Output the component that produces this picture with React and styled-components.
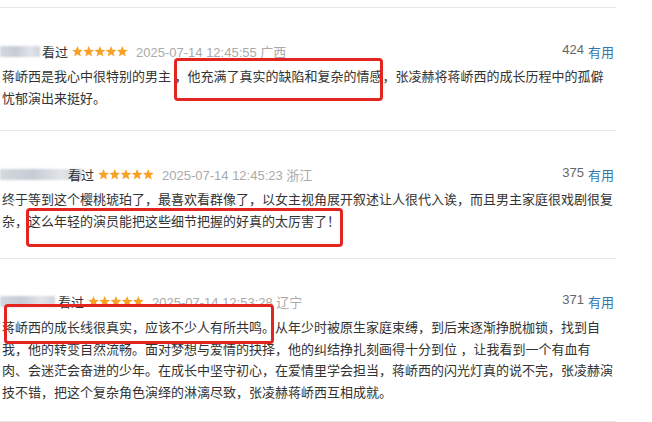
import React from 'react';
import styled, {createGlobalStyle} from "styled-components";

const reviews = [
    {
        blur: 40,
        blurGap: 2,
        date: '2025-07-14 12:45:55',
        place: '广西',
        votes: 424,
        pb: 21,
        text: '蒋峤西是我心中很特别的男主 ，他充满了真实的缺陷和复杂的情感，张凌赫将蒋峤西的成长历程中的孤僻忧郁演出来挺好。',
        mark: {top: 50, left: 174, width: 209, height: 43},
    },
    {
        blur: 82,
        blurGap: -14,
        date: '2025-07-14 12:45:23',
        place: '浙江',
        votes: 375,
        pb: 25,
        text: '终于等到这个樱桃琥珀了，最喜欢看群像了，以女主视角展开叙述让人很代入诶，而且男主家庭很戏剧很复杂，这么年轻的演员能把这些细节把握的好真的太厉害了！',
        mark: {top: 77, left: 26, width: 317, height: 39},
    },
    {
        blur: 55,
        blurGap: 3,
        date: '2025-07-14 12:53:28',
        place: '辽宁',
        votes: 371,
        pb: 17,
        text: '蒋峤西的成长线很真实，应该不少人有所共鸣。从年少时被原生家庭束缚，到后来逐渐挣脱枷锁，找到自我，他的转变自然流畅。面对梦想与爱情的抉择，他的纠结挣扎刻画得十分到位 ，让我看到一个有血有肉、会迷茫会奋进的少年。在成长中坚守初心，在爱情里学会担当，蒋峤西的闪光灯真的说不完，张凌赫演技不错，把这个复杂角色演绎的淋漓尽致，张凌赫蒋峤西互相成就。',
        mark: {top: 45, left: 4, width: 270, height: 40},
    },
];

const Stars = () => (
    <StarRow width="56" height="11" viewBox="0 0 56 11">
        {[0, 1, 2, 3, 4].map(i => (
            <polygon
                key={i}
                transform={`translate(${i * 11.2},0)`}
                points="5.5,0 7,3.7 10.9,3.9 7.9,6.4 8.9,10.5 5.5,8.3 2.1,10.5 3.1,6.4 0.1,3.9 4,3.7"
                fill="#f8a125"
            />
        ))}
    </StarRow>
);

const App = () => {
    return (
        <>
            <GlobalStyle/>
            <List>
                {
                    reviews.map((r, i) => (
                        <Review key={i} $pb={r.pb}>
                            <Header>
                                <Blur $w={r.blur}/>
                                <Watched $gap={r.blurGap}>看过</Watched>
                                <Stars/>
                                <DateText>{r.date} {r.place}</DateText>
                                <Votes>
                                    <Count>{r.votes}</Count>
                                    <Useful>有用</Useful>
                                </Votes>
                            </Header>
                            <Body>{r.text}</Body>
                            <Mark style={{
                                top: r.mark.top,
                                left: r.mark.left,
                                width: r.mark.width,
                                height: r.mark.height
                            }}/>
                        </Review>
                    ))
                }
            </List>
        </>
    );
};

const GlobalStyle = createGlobalStyle`
    body {
        margin: 0;
        background: #fff;
        font-family: "Liberation Sans", "Noto Sans CJK SC", sans-serif;
    }
`;

const List = styled.div`
    width: 616px;
    padding-top: 7px;
    border-bottom: 1px solid #e6e6e6;
`;

const Review = styled.div`
    position: relative;
    border-top: 1px solid #e6e6e6;
    padding: 33px 0 ${p => p.$pb}px;
`;

const Header = styled.div`
    display: flex;
    align-items: center;
    height: 20px;
    font-size: 13px;
    margin-bottom: 5px;
`;

const Blur = styled.span`
    width: ${p => p.$w}px;
    height: 11px;
    background: linear-gradient(90deg, #d3d8de, #c6ccd4 40%, #e1e4e8 75%, #cfd4da);
    filter: blur(1.2px);
    flex-shrink: 0;
`;

const Watched = styled.span`
    color: #333;
    margin-left: ${p => p.$gap}px;
    margin-right: 4px;
    position: relative;
`;

const StarRow = styled.svg`
    display: block;
    margin-right: 8px;
`;

const DateText = styled.span`
    color: #aaa;
`;

const Votes = styled.span`
    margin-left: auto;
    margin-right: 2px;
    display: flex;
    gap: 4px;
`;

const Count = styled.span`
    color: #666;
`;

const Useful = styled.span`
    color: #3377aa;
`;

const Body = styled.p`
    width: 612px;
    margin: 0;
    padding-left: 2px;
    font-size: 13px;
    line-height: 21.7px;
    color: #333;
`;

const Mark = styled.div`
    position: absolute;
    box-sizing: border-box;
    border: 3px solid #e3241f;
    border-radius: 4px;
    pointer-events: none;
`;

export default App;
